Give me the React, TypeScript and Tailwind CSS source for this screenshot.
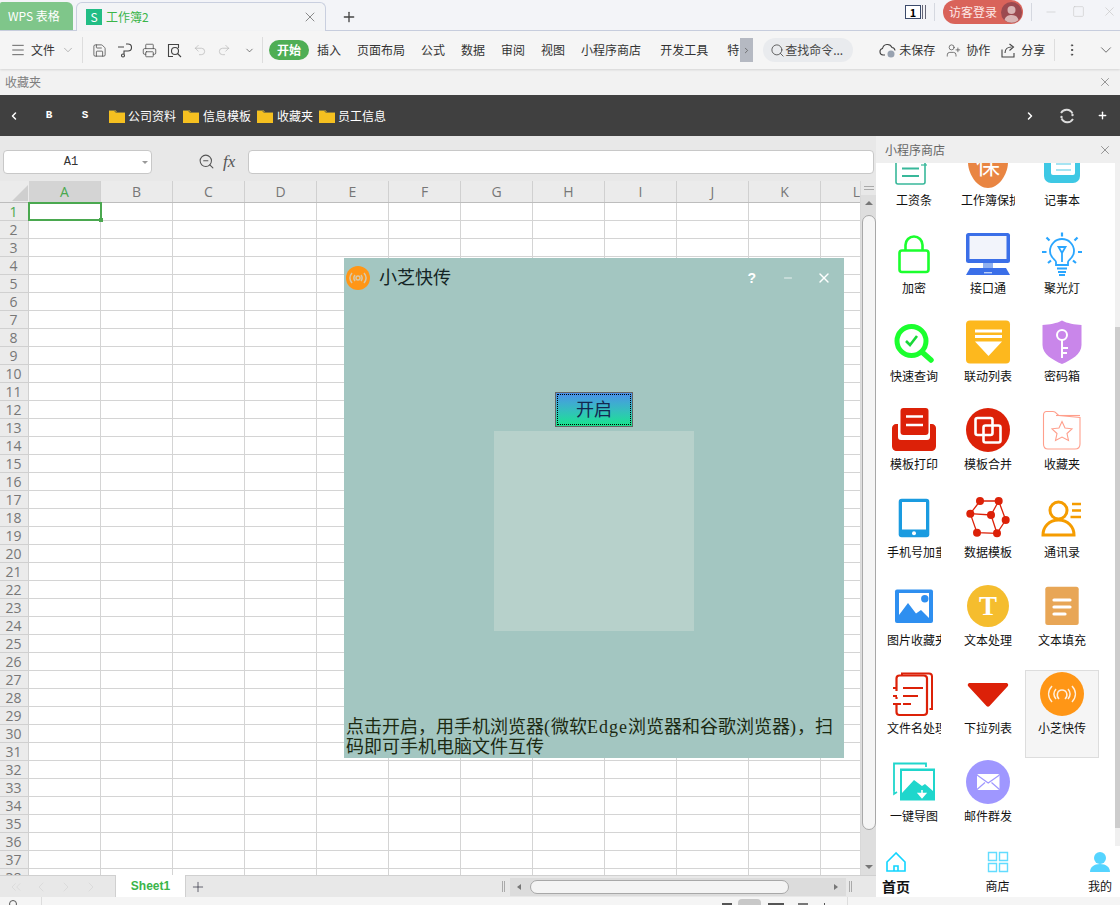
import React from 'react'
import { ChevronDown, ChevronLeft, ChevronRight, ChevronsLeft, Plus, X, Menu, Save, Printer, Undo2, Redo2, Search, ZoomOut, MoreVertical, UserPlus, Minus, Square } from 'lucide-react'

const UI = "font-['Noto_Sans_CJK_SC','Noto_Sans',sans-serif]"
const SERIF = "font-['Liberation_Serif','Noto_Sans_CJK_SC',serif]"

const COLS = ['A', 'B', 'C', 'D', 'E', 'F', 'G', 'H', 'I', 'J', 'K', 'L']
const ROWS = Array.from({ length: 38 }, (_, i) => i + 1)

const Folder = () => (
  <svg width="16" height="14" viewBox="0 0 16 14" className="shrink-0">
    <path d="M0 1h6l2 2h8v11H0z" fill="#f5c020" />
    <path d="M0 1h6l2 2h8v1H7L5 2H0z" fill="#8a7a3a" />
  </svg>
)

// icons for the store panel, all in a 48 box
const icons: Record<string, React.ReactNode> = {
  pay: (
    <>
      <rect x="6" y="-6" width="29" height="46" rx="2" fill="#fff" stroke="#38b89a" strokeWidth="1.6" />
      <path d="M12 24.500h17M12 32h17" stroke="#38b89a" strokeWidth="2" />
      <path d="M31 21h6" stroke="#38b89a" strokeWidth="1.2" />
    </>
  ),
  protect: (
    <>
      <path d="M4 -4h40v22c0 12-9 26-20 26S4 30 4 18z" fill="#e98542" />
      <text x="24" y="30" textAnchor="middle" fontSize="24" fill="#fff">保</text>
    </>
  ),
  note: (
    <>
      <rect x="6" y="-6" width="36" height="45" rx="7" fill="#3ec8e4" />
      <rect x="13" y="-4" width="24" height="35" rx="2" fill="#fff" />
      <path d="M18 20h15M18 26h15" stroke="#a6e4f2" strokeWidth="2" />
    </>
  ),
  lock: (
    <>
      <rect x="9.500" y="18.500" width="29" height="21.500" rx="2.500" fill="#fff" stroke="#1bff2e" strokeWidth="2.600" />
      <path d="M15.500 18v-5a8.500 8.500 0 0 1 17 0v5" fill="none" stroke="#1bff2e" strokeWidth="2.600" />
    </>
  ),
  monitor: (
    <>
      <rect x="2" y="1" width="44" height="30" rx="2.5" fill="#3b6fe8" />
      <rect x="5.5" y="4" width="37" height="23" fill="#f2f4fb" />
      <rect x="19" y="31" width="10" height="5" fill="#8fb0f0" />
      <path d="M6 36h36l4 7H2z" fill="#3b6fe8" />
      <rect x="20" y="40" width="8" height="1.4" fill="#bcd0f8" />
    </>
  ),
  bulb: (
    <g stroke="#2aa6ff" strokeWidth="1.8" fill="none">
      <path d="M18 33v-3c0-2-6-4-6-11a12 12 0 0 1 24 0c0 7-6 9-6 11v3z" />
      <path d="M19 36.5h10M20 40h8M21 43h6" />
      <path d="M20.5 15h7l-3.5 6zM24 21v9" />
      <path d="M24 0.5v4M8.5 5.5l3 3M39.5 5.5l-3 3M4 20h4.5M40 20h4M10 31l3-2.5M38 31l-3-2.5" strokeWidth="2.200" />
    </g>
  ),
  query: (
    <>
      <circle cx="21.5" cy="21" r="14.5" fill="#fff" stroke="#1bff2e" strokeWidth="5" />
      <path d="M32.5 32.5L41 40" stroke="#1bff2e" strokeWidth="5.5" strokeLinecap="round" />
      <path d="M16 21l4 4 7-9" fill="none" stroke="#18d838" strokeWidth="2.600" />
    </>
  ),
  linkage: (
    <>
      <rect x="2" y="0.5" width="44" height="43" rx="4" fill="#fdb81e" />
      <path d="M11 11h27M11 16.500h27" stroke="#fff" strokeWidth="2.8" />
      <path d="M11 21.500h27L24.500 36z" fill="#fff" />
    </>
  ),
  key: (
    <>
      <path d="M24 0.500c5 3 13 4 19.500 4.500v20c0 9-10 15-19.500 19C14.500 40 4.500 34 4.500 25V5C11 4.500 19 3.500 24 0.500z" fill="#c986ea" />
      <circle cx="24" cy="15" r="5" fill="none" stroke="#fff" strokeWidth="2" />
      <path d="M24 20v18M24 28h6M24 33h5" stroke="#fff" strokeWidth="2" />
    </>
  ),
  print: (
    <>
      <path d="M6 16h2v13c0 2 1 3 3 3h26c2 0 3-1 3-3V16h2c2 0 4 2 4 4v18c0 3-2 5-5 5H7c-3 0-5-2-5-5V20c0-2 2-4 4-4z" fill="#dc2108" />
      <rect x="10.500" y="0" width="28" height="27" rx="3" fill="#dc2108" />
      <path d="M16 8.500h17M16 17h17" stroke="#fff" strokeWidth="2.6" />
    </>
  ),
  merge: (
    <>
      <circle cx="24" cy="22" r="22" fill="#dc2108" />
      <rect x="11.500" y="10" width="17" height="17" rx="2" fill="none" stroke="#fff" strokeWidth="2.6" />
      <rect x="19.500" y="17.500" width="17" height="17" rx="2" fill="none" stroke="#fff" strokeWidth="2.6" />
    </>
  ),
  fav: (
    <>
      <path d="M5.500 7c0-2 1-3.500 3-3.500h6.500c3 0 4 3 6 4l21 2V36c0 3-2 5-5 5H10c-3 0-4.500-2-4.500-5z" fill="none" stroke="#ff9f8c" strokeWidth="1.1" />
      <path d="M18 7.500h24" stroke="#ff9f8c" strokeWidth="1.1" />
      <path d="M24 13.500l3 6.500 7 .8-5 4.700 1.500 7-6.500-3.500-6.500 3.500 1.500-7-5-4.700 7-.8z" fill="none" stroke="#ff9f8c" strokeWidth="1.1" />
    </>
  ),
  tablet: (
    <>
      <rect x="8.700" y="2.700" width="30.600" height="38.600" rx="3" fill="#1a9be0" />
      <rect x="12" y="6" width="24" height="27.500" fill="#fff" />
      <circle cx="24" cy="37.300" r="2" fill="#fff" />
    </>
  ),
  data: (
    <>
      <path d="M16 5L34.700 5L41.700 24L33 37.300L13 36.700L6.300 17.700zM6.300 17.700L27 19L34.700 5M27 19L33 37.300" fill="none" stroke="#dc2108" strokeWidth="1.300" />
      {[[16, 5], [34.7, 5], [6.3, 17.7], [27, 19], [41.7, 24], [13, 36.700], [33, 37.300]].map(([cx, cy]) => (
        <circle key={cx} cx={cx} cy={cy} r="4" fill="#dc2108" />
      ))}
    </>
  ),
  contact: (
    <>
      <circle cx="20.500" cy="14.500" r="8.500" fill="none" stroke="#f59c00" strokeWidth="3" />
      <path d="M5 39c0-8 6-15 15.500-15S36 31 36 39z" fill="none" stroke="#f59c00" strokeWidth="3" />
      <path d="M34 8h9M34 14.500h9M32.500 21h10.500" stroke="#f59c00" strokeWidth="2.600" />
    </>
  ),
  image: (
    <>
      <rect x="5" y="5.500" width="38" height="33.500" rx="2" fill="#2e8ff0" />
      <path d="M9 9h30v25L31 26l-5 3.500L18 19 9 31z" fill="#fff" />
      <circle cx="34.800" cy="14.700" r="3.700" fill="#2e8ff0" />
    </>
  ),
  textT: (
    <>
      <circle cx="24" cy="22" r="21" fill="#f5bd2e" />
      <text x="24" y="31" textAnchor="middle" fontSize="27" fontWeight="700" fill="#fff" fontFamily="Liberation Serif">T</text>
    </>
  ),
  fill: (
    <>
      <rect x="7.300" y="2.700" width="33.400" height="38.300" rx="2.500" fill="#e8a656" />
      <path d="M16 16h16M16 23h16M16 30h11" stroke="#fff" strokeWidth="3.200" strokeLinecap="round" />
    </>
  ),
  rename: (
    <g fill="none" stroke="#dc2108">
      <path d="M12 3V1.500h27c2 0 3 1 3 3V37h-2.500" strokeWidth="2" />
      <path d="M6.500 19V6.500c0-2 1-3 3-3h24c2 0 3.500 1 3.500 3V40c0 2-1.500 3-3.500 3h-24c-2 0-3-1-3-3v-7M6.500 25v2" strokeWidth="2.200" />
      <path d="M3 16h4M13 16h20M3 24h4M13 24h15M3 32h8M13 32h8" strokeWidth="2.200" />
    </g>
  ),
  dropdown: <path d="M6 11h36c2 0 3 2 1.500 3.500L25.500 34c-1 1-2 1-3 0L4.500 14.500C3 13 4 11 6 11z" fill="#dc2108" />,
  share: (
    <>
      <circle cx="24" cy="22" r="22" fill="#ff9616" />
      <g fill="none" stroke="#fff" strokeWidth="1.500" opacity="0.85">
        <path d="M14 14c-4.500 5-4.500 11 0 16M34 14c4.500 5 4.500 11 0 16M18 17c-2.500 3-2.500 7 0 10M30 17c2.500 3 2.500 7 0 10" />
        <path d="M21 27c-3-3-2-9 3-9s6.500 6 3 9" />
      </g>
    </>
  ),
  exportImg: (
    <>
      <path d="M4 31V3.500h32v3.500" fill="none" stroke="#1fd6cc" strokeWidth="1.800" />
      <path d="M4 31v3l3-2" fill="none" stroke="#1fd6cc" strokeWidth="1.600" />
      <rect x="10" y="8.500" width="35" height="32" fill="#1fd6cc" />
      <path d="M12 11h31v20l-8-7-3 2-8-6-12 13z" fill="#fff" />
      <path d="M32 30v5M28.500 33.500L32 37.500l3.500-4z" stroke="#fff" fill="#fff" strokeWidth="1.500" />
    </>
  ),
  mail: (
    <>
      <circle cx="24" cy="22" r="22" fill="#9f97ff" />
      <rect x="13" y="14" width="22.500" height="16" rx="1.500" fill="#fff" />
      <path d="M13 15l11.200 8L35.500 15M13 29.500l8-7M35.500 29.500l-8-7" fill="none" stroke="#9f97ff" strokeWidth="1.200" />
    </>
  ),
}

const apps = [
  ['工资条', 'pay'], ['工作簿保护', 'protect'], ['记事本', 'note'],
  ['加密', 'lock'], ['接口通', 'monitor'], ['聚光灯', 'bulb'],
  ['快速查询', 'query'], ['联动列表', 'linkage'], ['密码箱', 'key'],
  ['模板打印', 'print'], ['模板合并', 'merge'], ['收藏夹', 'fav'],
  ['手机号加重', 'tablet'], ['数据模板', 'data'], ['通讯录', 'contact'],
  ['图片收藏夹', 'image'], ['文本处理', 'textT'], ['文本填充', 'fill'],
  ['文件名处理', 'rename'], ['下拉列表', 'dropdown'], ['小芝快传', 'share'],
  ['一键导图', 'exportImg'], ['邮件群发', 'mail'],
]

const ToolText = ({ w, children }: { w: string; children: React.ReactNode }) => (
  <span className={`${w} shrink-0 whitespace-nowrap text-[12px] text-[#333]`}>{children}</span>
)

function TabBar() {
  return (
    <div className="h-[31px] flex bg-[#f3f4f8] border-b border-[#c9cfdf] shrink-0">
      <div className="mt-[2px] w-[73px] h-[28px] bg-[#7fc68a] rounded-tr-[6px] rounded-tl-[2px] text-white text-[12px] flex items-center pl-[8px]">WPS 表格</div>
      <div className="ml-[3px] mt-[2px] w-[250px] h-[29px] -mb-[1px] bg-[#f3f4f6] border border-b-0 border-[#c9cfdf] rounded-t-[6px] flex items-center pl-[9px] pr-[7px]">
        <span className="w-[16px] h-[16px] bg-[#22bd85] text-white text-[12px] leading-[16px] text-center">S</span>
        <span className="ml-[4px] text-[12px] text-[#3ab54a]">工作簿2</span>
        <X size={16} strokeWidth={1} className="ml-auto text-[#555]" />
      </div>
      <Plus size={16} strokeWidth={2} className="ml-[15px] mt-[9px] text-[#444]" />
      <div className="ml-auto flex items-start">
        <span className="mt-[5px] w-[16px] h-[14px] border border-[#3b4a6b] text-[11px] leading-[12px] font-bold text-center text-black bg-white">1</span>
        <span className="mt-[5px] ml-[1px] w-[4px] h-[14px] border-x border-[#667]" />
        <span className="mt-[3px] ml-[8px] w-px h-[18px] bg-[#d5d8e0]" />
        <div className="ml-[8px] w-[80px] h-[24px] rounded-full bg-[#d9635a] flex items-center pl-[6px] text-[12px] text-[#fde8e6]">
          <span>访客登录</span>
          <svg width="21" height="21" viewBox="0 0 21 21" className="ml-[4px]">
            <circle cx="10.500" cy="10.500" r="10.500" fill="#9b4a50" />
            <circle cx="10.500" cy="8" r="4" fill="#d9b4b4" />
            <path d="M3.500 18c1-4 4-5 7-5s6 1 7 5a10 10 0 0 1-14 0z" fill="#d9b4b4" />
          </svg>
        </div>
        <span className="mt-[3px] ml-[8px] w-px h-[18px] bg-[#d5d8e0]" />
        <Minus size={14} strokeWidth={1} className="ml-[12px] mt-[5px] text-[#c4c4c4]" />
        <Square size={13} strokeWidth={1} className="ml-[14px] mt-[5px] text-[#c4c4c4]" />
        <X size={15} strokeWidth={1} className="ml-[17px] mr-[3px] mt-[4px] text-[#c4c4c4]" />
      </div>
    </div>
  )
}

function Toolbar() {
  return (
    <div className="h-[38px] flex items-center bg-[#f5f5f5] shrink-0 pl-[10px] shadow-[0_1px_2px_rgba(0,0,0,0.12)] relative text-[#444]">
      <Menu size={16} strokeWidth={1.200} />
      <ToolText w="ml-[5px]">文件</ToolText>
      <ChevronDown size={14} strokeWidth={1} className="ml-[6px] text-[#888]" />
      <span className="ml-[7px] w-px h-[26px] bg-[#ddd]" />
      <Save size={15} strokeWidth={1.200} className="ml-[9px]" />
      <svg width="15" height="15" viewBox="0 0 15 15" className="ml-[10px]" fill="none" stroke="#444" strokeWidth="1.100">
        <path d="M1 4h6M9 1h2a3 3 0 0 1 0 7H7v3" />
        <circle cx="6" cy="12.500" r="1.500" />
      </svg>
      <Printer size={15} strokeWidth={1.200} className="ml-[10px]" />
      <svg width="15" height="15" viewBox="0 0 15 15" className="ml-[10px]" fill="none" stroke="#444" strokeWidth="1.100">
        <path d="M6 13.500H1.500v-12h10V5" />
        <circle cx="8" cy="8" r="3.500" />
        <path d="M10.500 10.500l3.500 3.500" />
      </svg>
      <Undo2 size={14} strokeWidth={1} className="ml-[11px] text-[#aaa]" />
      <Redo2 size={14} strokeWidth={1} className="ml-[10px] text-[#aaa]" />
      <ChevronDown size={11} strokeWidth={1.500} className="ml-[13px]" />
      <span className="ml-[7px] w-px h-[26px] bg-[#ddd]" />
      <span className="ml-[6px] w-[40px] h-[20px] rounded-full bg-[#4fae55] text-white text-[12px] font-bold leading-[20px] text-center">开始</span>
      <ToolText w="ml-[8px]">插入</ToolText>
      <ToolText w="ml-[16px]">页面布局</ToolText>
      <ToolText w="ml-[16px]">公式</ToolText>
      <ToolText w="ml-[16px]">数据</ToolText>
      <ToolText w="ml-[16px]">审阅</ToolText>
      <ToolText w="ml-[16px]">视图</ToolText>
      <ToolText w="ml-[16px]">小程序商店</ToolText>
      <ToolText w="ml-[19px]">开发工具</ToolText>
      <ToolText w="ml-[19px]">特</ToolText>
      <span className="ml-[1px] w-[13px] h-[24px] bg-[#b5b9c2] flex items-center justify-center">
        <ChevronRight size={9} className="text-[#555]" />
      </span>
      <div className="ml-[10px] w-[90px] h-[24px] rounded-full bg-[#e9ebee] flex items-center pl-[7px] text-[12px] text-[#444]">
        <Search size={15} strokeWidth={1.300} />
        <span className="whitespace-nowrap">查找命令...</span>
      </div>
      <svg width="17" height="16" viewBox="0 0 17 16" className="ml-[26px]" fill="none" stroke="#444" strokeWidth="1.100">
        <path d="M6 13H4a3.300 3.300 0 0 1-.5-6.500A5 5 0 0 1 13 5.500a3.500 3.500 0 0 1 3 3" />
        <circle cx="12" cy="12" r="3.500" fill="#98a2b0" stroke="none" />
      </svg>
      <ToolText w="ml-[3px]">未保存</ToolText>
      <UserPlus size={15} strokeWidth={1.100} className="ml-[11px]" />
      <ToolText w="ml-[5px]">协作</ToolText>
      <svg width="15" height="15" viewBox="0 0 15 15" className="ml-[11px]" fill="none" stroke="#444" strokeWidth="1.100">
        <path d="M1 6.500v7.500h12V10" />
        <path d="M4 10c0-4 3-6 6.500-6M8.500 1l4 3-4 3.500" />
      </svg>
      <ToolText w="ml-[5px]">分享</ToolText>
      <span className="ml-[9px] w-px h-[22px] bg-[#ddd]" />
      <MoreVertical size={16} strokeWidth={1.500} className="ml-[9px]" />
      <ChevronDown size={18} strokeWidth={1} className="ml-[17px]" />
    </div>
  )
}

function Sheet() {
  return (
    <div className="w-[876px] flex flex-col shrink-0">
      <div className="h-[45px] bg-[#e8e8e8] flex items-start pt-[14px] shrink-0">
        <div className="ml-[3px] w-[149px] h-[24px] bg-white border border-[#c8c8c8] rounded-[4px] flex items-center relative">
          <span className="w-full pr-[13px] text-center font-['Liberation_Mono',monospace] text-[12px] text-[#333]">A1</span>
          <span className="absolute right-[3px] top-[10px] border-x-[3px] border-x-transparent border-t-[3px] border-t-[#999]" />
        </div>
        <ZoomOut size={17} strokeWidth={1.500} className="ml-[46px] mt-[3px] text-[#555]" />
        <span className={`ml-[8px] w-[16px] text-[17px] italic leading-[24px] text-[#555] ${SERIF}`}>fx</span>
        <div className="ml-[9px] w-[626px] h-[24px] bg-white border border-[#c8c8c8] rounded-[4px]" />
      </div>
      <div className="flex-1 flex min-h-0">
        <div className="w-[860px] overflow-hidden">
          <div className="flex h-[22px] border-b border-[#bdbdbd] bg-[#ebebeb]">
            <div className="w-[29px] shrink-0 flex items-end justify-end p-[1px]">
              <span className="w-0 h-0 border-l-[16px] border-l-transparent border-b-[16px] border-b-[#cfcfcf]" />
            </div>
            {COLS.map((c, i) => (
              <div key={c} className={`w-[72px] shrink-0 border-r border-[#d0d0d0] text-center text-[14px] leading-[21px] font-['Open_Sans',sans-serif] ${i === 0 ? 'bg-[#d4d4d4] text-[#4aa84f]' : 'text-[#777]'}`}>{c}</div>
            ))}
          </div>
          {ROWS.map((r) => (
            <div key={r} className="flex h-[18px]">
              <div className={`w-[29px] shrink-0 bg-[#ebebeb] border-r border-b border-[#d0d0d0] pr-px text-center text-[14px] leading-[17px] font-['Open_Sans',sans-serif] ${r === 1 ? 'bg-[#d4d4d4] text-[#4aa84f]' : 'text-[#777]'}`}>{r}</div>
              {COLS.map((c) => (
                <div key={c} className="w-[72px] shrink-0 border-r border-b border-[#d4d4d4] bg-white relative">
                  {r === 1 && c === 'A' && (
                    <span className="absolute -left-px -top-px w-[74px] h-[19px] border-2 border-[#4aa84f] z-10">
                      <span className="absolute -right-[3px] -bottom-[3px] w-[4px] h-[4px] bg-[#4aa84f]" />
                    </span>
                  )}
                </div>
              ))}
            </div>
          ))}
        </div>
        <div className="w-[16px] bg-[#e8e8e8] border-l border-[#d8d8d8] flex flex-col items-center">
          <div className="h-[14px] shrink-0 flex flex-col justify-center gap-[2px] w-[10px]">
            <span className="h-px bg-[#aaa]" />
            <span className="h-px bg-[#aaa]" />
          </div>
          <div className="flex-1 w-full bg-[#dedede] flex flex-col items-center">
            <span className="mt-[6px] border-x-[4px] border-x-transparent border-b-[4px] border-b-[#777]" />
            <div className="mt-[10px] w-[14px] h-[615px] bg-[#f5f5f5] border border-[#a8a8a8] rounded-t-[7px] rounded-b-[7px]" />
            <span className="mt-auto mb-[6px] border-x-[4px] border-x-transparent border-t-[4px] border-t-[#777]" />
          </div>
        </div>
      </div>
      <div className="h-[22px] bg-[#e8e8e8] border-t border-[#d0d0d0] flex items-center shrink-0 relative">
        <div className="w-[115px] flex items-center pl-[8px] gap-[9px] text-[#d4d4d4]">
          <ChevronsLeft size={16} strokeWidth={1} />
          <ChevronLeft size={16} strokeWidth={1} />
          <ChevronRight size={16} strokeWidth={1} />
          <ChevronRight size={16} strokeWidth={1} />
        </div>
        <div className="w-[71px] h-[23px] -mt-px bg-white border-x border-b border-[#d0d0d0] text-center text-[12px] leading-[22px] font-bold text-[#3ab54a] font-['Liberation_Sans',sans-serif]">Sheet1</div>
        <Plus size={16} strokeWidth={1} className="ml-[4px] text-[#223]" />
        <span className="ml-[296px] w-[3px] h-[11px] border-x border-[#aaa]" />
        <div className="ml-[5px] w-[336px] h-[18px] bg-[#dcdcdc] flex items-center pl-[7px]">
          <span className="border-y-[3px] border-y-transparent border-r-[4px] border-r-[#777]" />
          <div className="ml-[9px] w-[259px] h-[14px] bg-[#f4f4f4] border border-[#a8a8a8] rounded-full" />
          <span className="ml-auto mr-[8px] border-y-[3px] border-y-transparent border-l-[4px] border-l-[#777]" />
        </div>
        <span className="ml-[3px] w-[3px] h-[11px] border-x border-[#aaa]" />
      </div>
    </div>
  )
}

function StorePanel() {
  return (
    <div className="flex-1 flex flex-col min-w-0 bg-white">
      <div className="h-[27px] bg-[#efefef] flex items-center pl-[9px] pr-[8px] text-[12px] text-[#666] shrink-0">
        <span>小程序商店</span>
        <X size={14} strokeWidth={1} className="ml-auto text-[#555]" />
      </div>
      <div className="flex-1 flex min-h-0">
        <div className="w-[239px] overflow-hidden pl-px">
          <div className="grid grid-cols-[74px_74px_74px] auto-rows-[88px] -mt-[21px]">
            {apps.map(([name, key]) => (
              <div key={name} className={`flex flex-col items-center border ${key === 'share' ? 'bg-[#f5f5f5] border-[#ddd]' : 'border-transparent'}`}>
                <svg width="48" height="48" viewBox="0 0 48 48" className="mt-px shrink-0 overflow-hidden">{icons[key]}</svg>
                <div className="w-[54px] overflow-hidden whitespace-nowrap text-center text-[12px] leading-[16px] text-[#111]">{name}</div>
              </div>
            ))}
          </div>
        </div>
        <div className="w-[5px] bg-[#f0f0f0] flex flex-col">
          <div className="h-[164px] shrink-0" />
          <div className="h-[501px] shrink-0 bg-[#cdcdcd]" />
        </div>
      </div>
      <div className="h-[51px] shrink-0 flex justify-between items-start pt-[5px] pl-[5px] pr-[8px]">
        <div className="w-[30px] flex flex-col items-center">
          <svg width="22" height="22" viewBox="0 0 22 22" fill="none" stroke="#11d5ff" strokeWidth="1.600">
            <path d="M11 2L2 11v9h18v-9zM9 20v-5h4v5" />
          </svg>
          <span className="mt-[3px] text-[14px] font-bold leading-[20px] text-[#111]">首页</span>
        </div>
        <div className="w-[26px] -ml-[4px] flex flex-col items-center">
          <svg width="22" height="22" viewBox="0 0 22 22" fill="none" stroke="#62dcff" strokeWidth="1.400">
            <path d="M1.500 1.500h8v8h-8zM12.500 1.500h8v8h-8zM1.500 12.500h8v8h-8zM12.500 12.500h8v8h-8z" />
          </svg>
          <span className="mt-[3px] text-[12px] leading-[20px] text-[#111]">商店</span>
        </div>
        <div className="w-[24px] flex flex-col items-center">
          <svg width="22" height="22" viewBox="0 0 22 22" fill="#55d4ff">
            <circle cx="11" cy="7" r="6" />
            <path d="M1 21c0-5 4-8 10-8s10 3 10 8z" />
          </svg>
          <span className="mt-[3px] text-[12px] leading-[20px] text-[#111]">我的</span>
        </div>
      </div>
    </div>
  )
}

function Dialog() {
  return (
    <div className={`absolute left-[344px] top-[258px] w-[500px] h-[500px] bg-[#a3c6c1] flex flex-col z-20 ${SERIF} text-[18px] text-[#142424]`}>
      <div className="h-[40px] shrink-0 flex items-center pl-[2px] pr-[12px]">
        <svg width="24" height="24" viewBox="0 0 48 48">
          <circle cx="24" cy="24" r="24" fill="#ff9616" />
          <g fill="none" stroke="#d8c8a8" strokeWidth="3">
            <path d="M12 14c-5 6-5 14 0 20M36 14c5 6 5 14 0 20M18 18c-3 4-3 8 0 12M30 18c3 4 3 8 0 12" />
            <circle cx="24" cy="24" r="4" />
          </g>
        </svg>
        <span className="ml-[9px] leading-none">小芝快传</span>
        <span className="ml-auto font-['Liberation_Sans',sans-serif] text-[14px] font-bold text-white">?</span>
        <Minus size={12} strokeWidth={1.500} className="ml-[26px] text-white" />
        <X size={16} strokeWidth={2} className="ml-[22px] text-white" />
      </div>
      <button className={`mt-[94px] mx-auto w-[78px] h-[35px] shrink-0 border border-[#666] bg-gradient-to-b from-[#4b8fe8] to-[#16e48a] p-px ${SERIF} text-[18px] text-[#142850]`}>
        <span className="flex items-center justify-center w-full h-full border border-dotted border-black leading-none">开启</span>
      </button>
      <div className="mt-[4px] mx-auto w-[200px] h-[200px] shrink-0 bg-[#b7d1cb]" />
      <p className="mt-auto px-[2px] pb-[1px] text-[18px] leading-[20px] text-[#1c2a12]">
        点击开启，用手机浏览器<span className="tracking-[1px]">(</span>微软<span className="tracking-[1px]">Edge</span>浏览器和谷歌浏览器<span className="tracking-[1px]">)</span>，扫码即可手机电脑文件互传
      </p>
    </div>
  )
}

export default function App() {
  return (
    <div className={`w-[1120px] h-[905px] relative overflow-hidden flex flex-col bg-white ${UI}`}>
      <TabBar />
      <Toolbar />
      <div className="h-[26px] bg-[#f2f2f2] flex items-center pl-[5px] pr-[8px] text-[12px] text-[#7f7f7f] shrink-0">
        <span>收藏夹</span>
        <X size={14} strokeWidth={1} className="ml-auto text-[#555]" />
      </div>
      <div className="h-[41px] bg-[#404040] flex items-center pl-[8px] pr-[12px] text-white text-[12px] shrink-0">
        <ChevronLeft size={12} strokeWidth={3} />
        <span className="ml-[24px] w-[10px] text-center font-['Liberation_Mono',monospace] text-[11px] font-bold">B</span>
        <span className="ml-[26px] w-[10px] text-center font-['Liberation_Mono',monospace] text-[11px] font-bold">S</span>
        <span className="ml-[19px]"><Folder /></span>
        <span className="ml-[3px]">公司资料</span>
        <span className="ml-[7px]"><Folder /></span>
        <span className="ml-[4px]">信息模板</span>
        <span className="ml-[6px]"><Folder /></span>
        <span className="ml-[4px]">收藏夹</span>
        <span className="ml-[6px]"><Folder /></span>
        <span className="ml-[3px]">员工信息</span>
        <ChevronRight size={12} strokeWidth={3} className="ml-auto" />
        <svg width="16" height="16" viewBox="0 0 16 16" className="ml-[23px]" fill="none" stroke="#ddd" strokeWidth="1.800">
          <path d="M13.500 5.500A6.500 6.500 0 0 0 2 5M2.500 10.500A6.500 6.500 0 0 0 14 11" />
          <circle cx="13.500" cy="7" r="1.200" fill="#ddd" stroke="none" />
          <circle cx="2.500" cy="9" r="1.200" fill="#ddd" stroke="none" />
        </svg>
        <Plus size={11} strokeWidth={3} className="ml-[22px]" />
      </div>
      <div className="flex-1 flex min-h-0">
        <Sheet />
        <StorePanel />
      </div>
      <div className="h-[8px] bg-[#f5f5f5] shrink-0 flex overflow-hidden relative">
        <span className="ml-[9px] mt-[3px] w-[8px] h-[8px] border border-[#555] rounded-full" />
        <span className="ml-[24px] w-px h-full bg-[#ddd]" />
        <span className="ml-[680px] mt-[6px] w-[10px] h-[2px] bg-[#555]" />
        <span className="ml-[6px] mt-[2px] w-[23px] h-[8px] bg-[#c8c8c8] rounded-t-[4px]" />
        <span className="ml-[7px] mt-[6px] w-[16px] h-[2px] bg-[#555]" />
        <span className="ml-[14px] mt-[6px] w-[10px] h-[2px] bg-[#777]" />
        <span className="ml-[16px] mt-[6px] w-px h-[2px] bg-[#555]" />
        <span className="ml-[22px] w-px h-full bg-[#ddd]" />
      </div>
      <Dialog />
    </div>
  )
}
